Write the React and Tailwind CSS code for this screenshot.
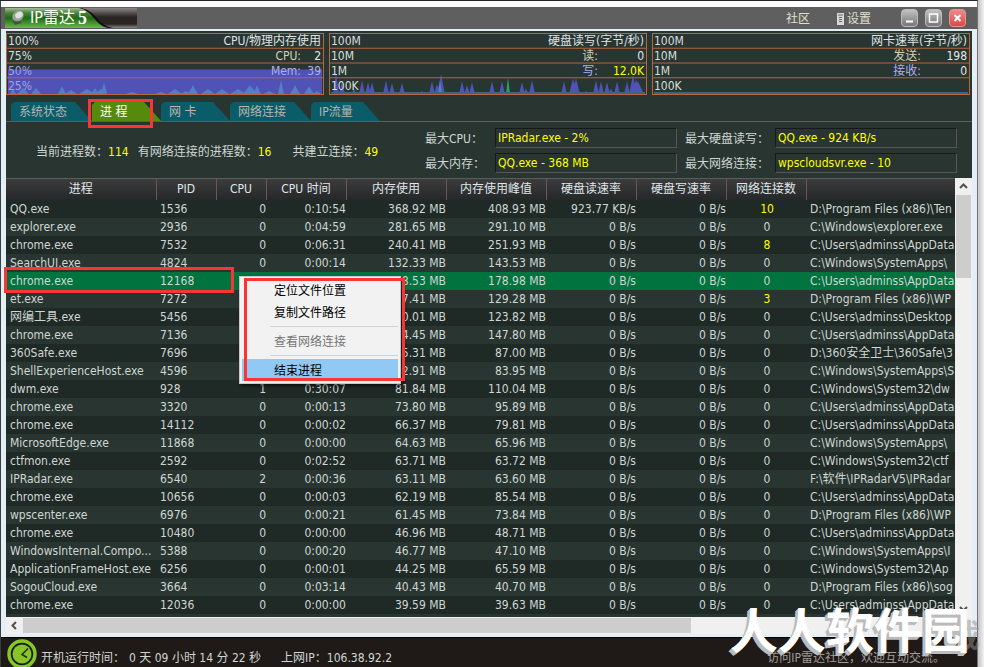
import React from 'react';

const rows = [
  ['QQ.exe', 1536, 0, '0:10:54', '368.92 MB', '408.93 MB', '923.77 KB/s', 10, 'D:\\Program Files (x86)\\Ten'],
  ['explorer.exe', 2936, 0, '0:04:59', '281.65 MB', '291.10 MB', '0 B/s', 0, 'C:\\Windows\\explorer.exe'],
  ['chrome.exe', 7532, 0, '0:06:31', '240.41 MB', '251.93 MB', '0 B/s', 8, 'C:\\Users\\adminss\\AppData'],
  ['SearchUI.exe', 4824, 0, '0:00:14', '132.33 MB', '143.53 MB', '0 B/s', 0, 'C:\\Windows\\SystemApps\\'],
  ['chrome.exe', 12168, 0, '0:00:57', '178.53 MB', '178.98 MB', '0 B/s', 0, 'C:\\Users\\adminss\\AppData'],
  ['et.exe', 7272, 0, '0:00:39', '127.41 MB', '129.28 MB', '0 B/s', 3, 'D:\\Program Files (x86)\\WP'],
  ['网编工具.exe', 5456, 0, '0:00:21', '120.01 MB', '123.82 MB', '0 B/s', 0, 'C:\\Users\\adminss\\Desktop'],
  ['chrome.exe', 7136, 0, '0:01:22', '114.45 MB', '147.80 MB', '0 B/s', 0, 'C:\\Users\\adminss\\AppData'],
  ['360Safe.exe', 7696, 0, '0:00:18', '85.31 MB', '87.00 MB', '0 B/s', 0, 'D:\\360安全卫士\\360Safe\\3'],
  ['ShellExperienceHost.exe', 4596, 0, '0:00:09', '82.91 MB', '83.95 MB', '0 B/s', 0, 'C:\\Windows\\SystemApps\\S'],
  ['dwm.exe', 928, 1, '0:30:07', '81.84 MB', '110.04 MB', '0 B/s', 0, 'C:\\Windows\\System32\\dw'],
  ['chrome.exe', 3320, 0, '0:00:13', '73.80 MB', '95.89 MB', '0 B/s', 0, 'C:\\Users\\adminss\\AppData'],
  ['chrome.exe', 14112, 0, '0:00:02', '66.37 MB', '79.81 MB', '0 B/s', 0, 'C:\\Users\\adminss\\AppData'],
  ['MicrosoftEdge.exe', 11868, 0, '0:00:00', '64.63 MB', '65.96 MB', '0 B/s', 0, 'C:\\Windows\\SystemApps\\'],
  ['ctfmon.exe', 2592, 0, '0:02:52', '63.71 MB', '63.72 MB', '0 B/s', 0, 'C:\\Windows\\System32\\ctf'],
  ['IPRadar.exe', 6540, 2, '0:00:36', '63.11 MB', '63.60 MB', '0 B/s', 0, 'F:\\软件\\IPRadarV5\\IPRadar'],
  ['chrome.exe', 10656, 0, '0:00:03', '62.19 MB', '85.54 MB', '0 B/s', 0, 'C:\\Users\\adminss\\AppData'],
  ['wpscenter.exe', 6976, 0, '0:00:21', '61.45 MB', '73.84 MB', '0 B/s', 0, 'D:\\Program Files (x86)\\WP'],
  ['chrome.exe', 10480, 0, '0:00:00', '46.96 MB', '48.71 MB', '0 B/s', 0, 'C:\\Users\\adminss\\AppData'],
  ['WindowsInternal.Compo...', 5388, 0, '0:00:20', '46.77 MB', '47.10 MB', '0 B/s', 0, 'C:\\Windows\\SystemApps\\I'],
  ['ApplicationFrameHost.exe', 6256, 0, '0:00:01', '44.25 MB', '65.59 MB', '0 B/s', 0, 'C:\\Windows\\System32\\Ap'],
  ['SogouCloud.exe', 3664, 0, '0:03:14', '40.43 MB', '40.70 MB', '0 B/s', 0, 'D:\\Program Files (x86)\\sog'],
  ['chrome.exe', 12036, 0, '0:00:00', '39.59 MB', '39.63 MB', '0 B/s', 0, 'C:\\Users\\adminss\\AppData'],
];

const headers = ['进程', 'PID', 'CPU', 'CPU 时间', '内存使用', '内存使用峰值', '硬盘读速率', '硬盘写速率', '网络连接数', ''];

const peaks = (list) => list.map(([x, h, w = 3]) => `M${x - w} 61L${x} ${61 - h}L${x + w} 61Z`).join('');

const cpuPeaks = peaks([[6, 5], [16, 6, 6], [29, 6, 5], [55, 8, 4], [64, 4, 6], [80, 5, 8], [88, 6, 4], [97, 12, 3], [94, 5, 6], [125, 2, 6], [154, 2, 6], [168, 5, 7], [179, 3, 6], [186, 9, 5], [201, 5, 7], [215, 5, 7], [231, 5, 8], [243, 9, 7], [250, 9, 4], [262, 3, 6], [274, 14, 3], [288, 9, 5], [302, 8, 5], [310, 3, 4]]);
const diskPeaks = peaks([[6, 22], [12, 13], [24, 5], [32, 14], [38, 12], [42, 12], [56, 14], [62, 11], [72, 11], [92, 3], [102, 13], [107, 10], [111, 20, 4], [132, 13], [137, 9], [142, 12], [162, 13], [172, 13], [192, 12], [196, 5], [202, 14], [234, 13], [243, 16, 4], [246, 16, 4], [256, 3], [266, 14], [271, 13], [277, 12], [281, 5], [287, 13], [297, 13], [303, 19, 4], [306, 15, 4], [308, 13, 6]]);

function Graph({ scale, title, a, b, valueWidth, children }) {
  return (
    <section className="relative flex-1 border border-[#b5673f]">
      <svg className="absolute inset-0 size-full" viewBox="0 0 316 61" preserveAspectRatio="none" aria-hidden="true">
        {children}
        <path d="M0 14.5H316M0 29.5H316M0 44.5H316" stroke="#b5673f" />
      </svg>
      <div className="relative leading-[15px]">
        {scale.map((label, i) => (
          <div key={label} className="flex h-[15px] justify-between pr-[2px] pl-px">
            <span className={scale[0] === '100%' && i > 1 ? 'text-[#a2a2e6]' : 'text-[#d8ddda]'}>{label}</span>
            {i === 0 && <span className="text-[#dfe4e2]">{title}</span>}
            {i === 1 && <Reading label={a[0]} value={a[1]} tone="text-[#d3d2b4]" width={valueWidth} />}
            {i === 2 && <Reading label={b[0]} value={b[1]} tone="text-[#aeaef5]" valueTone={b[2]} width={valueWidth} />}
          </div>
        ))}
      </div>
    </section>
  );
}

function Reading({ label, value, tone, width, valueTone = 'text-[#e4e8e6]' }) {
  return (
    <span className="flex">
      <span className={tone}>{label}</span>
      <span className={'text-right ' + width + ' ' + valueTone}>{value}</span>
    </span>
  );
}

const tabs = [
  ['系统状态', 'w-[81px]'],
  ['进 程', 'w-[69px]'],
  ['网 卡', 'w-[69px]'],
  ['网络连接', 'w-[81px]'],
  ['IP流量', 'w-[69px]'],
];

function Field({ id, label, value, labelWidth }) {
  return (
    <div className="flex h-5 items-center">
      <label htmlFor={id} className={'pt-[2px] ' + labelWidth}>{label}</label>
      <input id={id} readOnly value={value} className="h-5 w-[182px] border border-t-[#17191a] border-r-[#5a5456] border-b-[#5a5456] border-l-[#17191a] bg-transparent px-[2px] text-[#ffff00] outline-none" />
    </div>
  );
}

function ProcessTable() {
  return (
    <table className="w-full table-fixed border-collapse">
      <colgroup>
        <col className="w-[150px]" /><col className="w-[60px]" /><col className="w-[50px]" />
        <col className="w-[80px]" /><col className="w-[100px]" /><col className="w-[100px]" />
        <col className="w-[90px]" /><col className="w-[90px]" /><col className="w-[80px]" /><col />
      </colgroup>
      <thead>
        <tr className="h-[21px] bg-linear-to-b from-[#3c3c3c] to-[#252728]">
          {headers.map((h, i) => (
            <th key={i} className="border-t border-r border-t-[#5c5c5c] border-r-[#6b545a] p-0 font-normal text-[#dfe6e9] last:border-r-0">{h}</th>
          ))}
        </tr>
      </thead>
      <tbody>
        {rows.map(([name, pid, cpu, time, mem, peak, read, conn, path], i) => (
          <tr key={pid} className={'h-[18px] whitespace-nowrap leading-[18px] ' + (i === 4 ? 'bg-[#00733f]' : i % 2 ? 'bg-[#283530]' : 'bg-[#1f2926]')}>
            <td className="overflow-hidden p-0 pl-1">{name}</td>
            <td className="p-0 pl-1">{pid}</td>
            <td className="p-0 text-right">{cpu}</td>
            <td className="p-0 text-right">{time}</td>
            <td className="p-0 text-right">{mem}</td>
            <td className="p-0 text-right">{peak}</td>
            <td className="p-0 text-right">{read}</td>
            <td className="p-0 text-right">0 B/s</td>
            <td className={'p-0 pl-[2px] text-center ' + (conn ? 'text-[#ffff00]' : '')}>{conn}</td>
            <td className="overflow-hidden p-0 pl-1">{path}</td>
          </tr>
        ))}
      </tbody>
    </table>
  );
}

const menuItem = 'block h-[22px] w-full pt-[2px] pl-8 text-left ';

function ContextMenu() {
  return (
    <div role="menu" className="absolute top-[276px] left-[239px] w-[162px] border border-[#c9c9c9] bg-[#f2f2f2] p-[2px] text-black shadow-[2px_2px_3px_rgba(0,0,0,0.6)]">
      <button role="menuitem" className={menuItem}>定位文件位置</button>
      <button role="menuitem" className={menuItem}>复制文件路径</button>
      <hr className="my-[3px] ml-7 border-[#d2d2d2]" />
      <button role="menuitem" disabled className={menuItem + 'text-[#767676]'}>查看网络连接</button>
      <hr className="my-[3px] ml-7 border-[#d2d2d2]" />
      <button role="menuitem" className={menuItem + 'bg-[#90c8f6]'}>结束进程</button>
    </div>
  );
}

const winButton = 'flex h-[18px] w-[17px] items-center justify-center rounded-[4px] border ';

export default function App() {
  return (
    <div className="relative flex h-screen flex-col overflow-hidden bg-linear-to-l from-[#f2f2f2] from-0% to-[#c4c4c4] to-[6px] pr-[6px] text-[12px] leading-[15px] text-[#cfd6d3] [font-family:'DejaVu_Sans_Condensed','Noto_Sans_CJK_SC',sans-serif]">
      <div className="flex min-h-0 flex-1 flex-col border-t border-r border-l border-t-[#22262a] border-r-[#77727a] border-l-[#3a4040] bg-[#e3eef5]">
        <div className="h-[6px] shrink-0 bg-white" />
        <header className="flex h-[22px] shrink-0 items-center justify-between bg-[#5f5f5f] pr-[11px] pl-1">
          <Logo />
          <nav className="flex items-center text-[#e0e0d0]">
            <button className="mr-[27px] pt-[2px]">社区</button>
            <button className="mr-[30px] flex items-center gap-[3px] pt-[2px]">
              <svg width="7" height="12" viewBox="0 0 7 12" aria-hidden="true"><path d="M0 0h7v12H0Z" fill="#d8d8d8" /><path d="M1 2h5M2 4.5h3M2 6.5h3M2 8.5h3" stroke="#666" /></svg>
              设置
            </button>
            <div className="flex gap-[7px]">
              <button aria-label="最小化" className={winButton + 'border-[#bdbdbd] bg-linear-to-b from-[#c2c2c2] to-[#777]'}>
                <svg className="shrink-0" width="15" height="16" viewBox="0 0 15 16"><path d="M4 11.5h7" stroke="#fff" strokeWidth="2" /></svg>
              </button>
              <button aria-label="最大化" className={winButton + 'border-[#bdbdbd] bg-linear-to-b from-[#c2c2c2] to-[#777]'}>
                <svg className="shrink-0" width="15" height="16" viewBox="0 0 15 16"><path d="M3.500 4h8v8h-8Z" fill="none" stroke="#fff" strokeWidth="1.500" /></svg>
              </button>
              <button aria-label="关闭" className={winButton + 'border-[#f09090] bg-linear-to-b from-[#ec8a8a] to-[#d84848]'}>
                <svg className="shrink-0" width="15" height="16" viewBox="0 0 15 16"><path d="M4.500 5l6 6M10.500 5l-6 6" stroke="#fff" strokeWidth="2" /></svg>
              </button>
            </div>
          </nav>
        </header>
        <main className="mx-[5px] mt-[2px] flex min-h-0 flex-1 flex-col bg-[#283530]">
          <div className="mt-[2px] mr-[2px] flex h-[62px] shrink-0 gap-[5px]">
            <Graph scale={['100%', '75%', '50%', '25%']} title="CPU/物理内存使用" a={['CPU:', 2]} b={['Mem:', 39, 'text-[#b0b0e8]']} valueWidth="w-[20px]">
              <path d="M1 36H315V61H1Z" fill="#5052b6" />
              <path d={cpuPeaks} fill="#5280c8" />
            </Graph>
            <Graph scale={['100M', '10M', '1M', '100K']} title="硬盘读写(字节/秒)" a={['读:', 0]} b={['写:', '12.0K', 'text-[#ffff00]']} valueWidth="w-[46px]">
              <path d={diskPeaks} fill="#5052b6" />
              <path d={peaks([[110, 14, 2]])} fill="#5280c8" />
              <path d={peaks([[178, 17, 2]])} fill="#2e9e68" />
              <path d="M1 60H315" stroke="#3c6486" strokeWidth="2" />
            </Graph>
            <Graph scale={['100M', '10M', '1M', '100K']} title="网卡速率(字节/秒)" a={['发送:', 198]} b={['接收:', 0]} valueWidth="w-[46px]">
              <path d="M1 60H315" stroke="#3c6486" strokeWidth="2" />
            </Graph>
          </div>
          <div className="mt-[7px] flex h-5 shrink-0 border-b border-[#5d6a1c] pl-[5px]">
            {tabs.map(([label, width], i) => (
              <button key={label} className={'h-[19px] pt-[2px] pl-2 text-left [clip-path:polygon(0_3px,3px_0,calc(100%-17px)_0,100%_100%,0_100%)] ' + width + (i === 1 ? ' bg-[#558a0c] text-white' : ' bg-[#0b5c69] text-[#b8b4ae]')}>{label}</button>
            ))}
          </div>
          <div className="flex shrink-0 items-center justify-between pt-[6px] pb-[5px] pl-[30px] pr-[15px]">
            <p className="flex gap-[9px] pt-[3px]">
              <span>当前进程数：<b className="font-normal text-[#ffff00]">114</b></span>
              <span>有网络连接的进程数：<b className="font-normal text-[#ffff00]">16</b></span>
              <span className="ml-3">共建立连接：<b className="font-normal text-[#ffff00]">49</b></span>
            </p>
            <div className="grid grid-cols-[auto_auto] gap-x-2 gap-y-[5px]">
              <Field id="cpu" label="最大CPU：" value="IPRadar.exe - 2%" labelWidth="w-[70px]" />
              <Field id="disk" label="最大硬盘读写：" value="QQ.exe - 924 KB/s" labelWidth="w-[90px]" />
              <Field id="mem" label="最大内存：" value="QQ.exe - 368 MB" labelWidth="w-[70px]" />
              <Field id="net" label="最大网络连接：" value="wpscloudsvr.exe - 10" labelWidth="w-[90px]" />
            </div>
          </div>
          <div className="flex min-h-0 flex-1">
            <div className="min-w-0 flex-1 overflow-hidden"><ProcessTable /></div>
            <div className="flex w-[17px] flex-col items-center bg-[#f0f0f0]">
              <Arrow d="M5 10l3.500-3.500L12 10" />
              <div className="h-[83px] w-[15px] bg-[#cdcdcd]" />
              <div className="flex-1" />
              <Arrow d="M5 7l3.500 3.500L12 7" />
            </div>
          </div>
          <div className="flex h-[17px] shrink-0 justify-between bg-[#f0f0f0]">
            <div className="flex">
              <Arrow d="M10 5L6.500 8.500L10 12" />
              <div className="my-px w-[668px] bg-[#cdcdcd]" />
            </div>
          </div>
        </main>
        <footer className="mt-[3px] flex h-[30px] shrink-0 items-start border-t border-black bg-[#1f1a17] pr-[10px] pl-[6px]">
          <svg className="mt-px shrink-0" width="30" height="30" viewBox="0 0 30 30" aria-hidden="true">
            <circle cx="15" cy="15" r="13" fill="none" stroke="#86c626" strokeWidth="3.500" />
            <circle cx="15" cy="15" r="9.500" fill="#86c626" />
            <path d="M21 9.500L15 15.500L20 18.500" fill="none" stroke="#27300f" strokeWidth="1.600" />
          </svg>
          <p className="flex min-w-0 flex-1 pt-[13px] pl-1">
            <span>开机运行时间：</span>
            <span className="ml-1">0 天 09 小时 14 分 22 秒</span>
            <span className="ml-5">上网IP：106.38.92.2</span>
            <a href="#community" className="mr-[22px] ml-auto text-[#a09c9a]">访问IP雷达社区，欢迎互动交流。</a>
          </p>
        </footer>
      </div>
      <ContextMenu />
      <div className="pointer-events-none absolute top-[99px] left-[88px] h-[29px] w-[65px] border-3 border-[#fb3434]" />
      <div className="pointer-events-none absolute top-[267px] left-[4px] h-[26px] w-[230px] border-3 border-[#fb3434]" />
      <div className="pointer-events-none absolute top-[278px] left-[244px] h-[103px] w-[161px] border-3 border-[#fb3434]" />
      <div className="pointer-events-none absolute right-[4px] bottom-[16px] text-[32px] leading-[36px] font-bold text-[#909090]/50 [font-family:'Noto_Sans_CJK_SC',sans-serif]">载</div>
      <div className="pointer-events-none absolute right-[14px] bottom-[13px] text-[48px] leading-[54px] font-bold whitespace-nowrap text-white [font-family:'Noto_Sans_CJK_SC',sans-serif] [text-shadow:-1px_1px_0_#bbb,-2px_2px_0_#bbb,-3px_3px_0_#bbb]">人人软件园</div>
    </div>
  );
}

function Arrow({ d }) {
  return (
    <svg className="shrink-0" width="17" height="17" viewBox="0 0 17 17" aria-hidden="true">
      <path d={d} fill="none" stroke="#505050" strokeWidth="2" />
    </svg>
  );
}

function Logo() {
  return (
    <div className="relative flex h-5 w-[132px] items-center pl-[25px] text-white">
      <svg className="absolute inset-0" width="132" height="20" viewBox="0 0 132 20" aria-hidden="true">
        <defs>
          <linearGradient id="green" x1="0" y1="0" x2="0" y2="1"><stop offset="0" stopColor="#a4bd98" /><stop offset=".25" stopColor="#4c8038" /><stop offset=".5" stopColor="#1f6a14" /><stop offset="1" stopColor="#6ab84a" /></linearGradient>
          <linearGradient id="steel" x1="0" y1="0" x2="0" y2="1"><stop offset="0" stopColor="#8a8684" /><stop offset=".45" stopColor="#2a2422" /><stop offset=".8" stopColor="#2a2422" /><stop offset="1" stopColor="#8a8684" /></linearGradient>
        </defs>
        <path d="M0 0H132V20H0Z" fill="url(#steel)" />
        <path d="M0 0H76C92 3 92 17 108 20H0Z" fill="#111" />
        <path d="M0 0H74C89 3 89 17 103 20H0Z" fill="url(#green)" />
        <path d="M8 6C7 11 11 14 15 13L17 15L10 17L8 14Z" fill="#49524a" />
        <ellipse cx="13" cy="8" rx="6" ry="5" transform="rotate(-35 13 8)" fill="#9aa39a" />
        <ellipse cx="14" cy="7" rx="4" ry="3" transform="rotate(-35 14 7)" fill="#dde2dd" />
      </svg>
      <span className="relative text-[16px] leading-5">IP雷达</span>
      <b className="relative ml-[3px] text-[18px] leading-5 [font-family:'Liberation_Serif',serif]">5</b>
    </div>
  );
}
